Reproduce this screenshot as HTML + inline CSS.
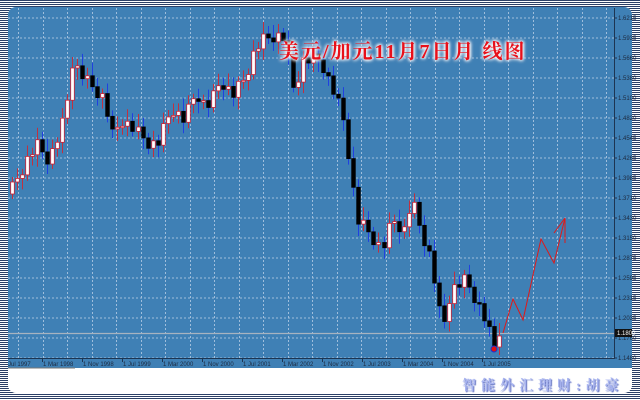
<!DOCTYPE html>
<html><head><meta charset="utf-8"><style>
html,body{margin:0;padding:0;}
body{width:640px;height:400px;overflow:hidden;position:relative;
background:repeating-linear-gradient(to bottom,#2b3f66 0,#2b3f66 1px,#fff 1px,#fff 2px);}
#panel{position:absolute;left:8px;top:7px;width:624px;height:386px;border-radius:8px;background:#fff;overflow:hidden;}
#blue{position:absolute;left:0;top:0;width:624px;height:361px;background:#3f80b5;}
svg{position:absolute;left:0;top:0;}
.t{position:absolute;left:279px;top:35px;font:bold 20px "Liberation Serif","Noto Serif CJK SC",serif;color:#e8101a;letter-spacing:2px;white-space:nowrap;
text-shadow:0 0 3px #fff,0 0 3px #fff,0 0 4px #fff,0 0 5px #dde;}
.b{position:absolute;left:462px;top:375px;font:bold 14px "Liberation Serif","Noto Serif CJK SC",serif;color:#a8b4f0;letter-spacing:5px;white-space:nowrap;text-shadow:1px 1px 1px #6070c0;}
</style></head><body>
<div id="panel"><div id="blue"></div></div>
<svg id="s" width="640" height="400"></svg>
<div class="t">美元/加元11月7日月 线图</div>
<div class="b">智能外汇理财:胡豪</div>
<script>
(function(){
var s=document.getElementById('s'),h='';
for(var y=18;y<=358;y+=20)h+='<line x1="8" y1="'+y+'" x2="614" y2="'+y+'" stroke="#9fbedc" stroke-dasharray="2,2" stroke-width="1"/>';
for(var x=18;x<614;x+=24.5)h+='<line x1="'+Math.round(x)+'.5" y1="8" x2="'+Math.round(x)+'.5" y2="358" stroke="#9fbedc" stroke-dasharray="2,2" stroke-width="1"/>';
h+='<line x1="614.5" y1="8" x2="614.5" y2="359" stroke="#1d3552"/><line x1="8" y1="358.5" x2="615" y2="358.5" stroke="#1d3552"/>';
var pr=['1.6215','1.5935','1.5660','1.5380','1.5100','1.4820','1.4545','1.4265','1.3985','1.3710','1.3430','1.3150','1.2875','1.2595','1.2315','1.2035','1.1760','1.1480'];
for(var i=0;i<pr.length;i++){var yy=18+i*20;h+='<line x1="614" y1="'+yy+'" x2="617" y2="'+yy+'" stroke="#1d3552"/><text x="618" y="'+(yy+2)+'" font-size="6" font-family="Liberation Sans" fill="#1d2a40">'+pr[i]+'</text>';}
var ds=['Jul 1997','1 Mar 1998','1 Nov 1998','1 Jul 1999','1 Mar 2000','1 Nov 2000','1 Jul 2001','1 Mar 2002','1 Nov 2002','1 Jul 2003','1 Mar 2004','1 Nov 2004','1 Jul 2005'];
for(i=0;i<ds.length;i++){var xx=2+i*40;h+='<text x="'+(i?xx+1:8)+'" y="366" font-size="6" font-family="Liberation Sans" fill="#1d2a40">'+ds[i]+'</text>';if(i)h+='<line x1="'+(xx+0.5)+'" y1="358" x2="'+(xx+0.5)+'" y2="362" stroke="#1d3552"/>';}
h+='<line x1="8" y1="333.5" x2="614" y2="333.5" stroke="#a7b3c0" stroke-width="1.2"/>';
h+='<rect x="615" y="329" width="17" height="8" fill="#111"/><text x="617" y="335" font-size="6" fill="#fff" font-family="Liberation Sans">1.1800</text>';
h+='<line x1="8" y1="368" x2="75" y2="368" stroke="#777"/>';
var A=[[10,188],[22,160],[30,145],[40,160],[50,130],[56,95],[58,60],[70,80],[85,98],[92,135],[100,120],[110,130],[120,142],[128,145],[140,108],[150,120],[160,92],[168,108],[175,95],[180,80],[190,95],[200,78],[208,50],[215,40],[225,35],[232,38],[240,90],[248,60],[262,60],[272,90],[280,115],[285,155],[292,220],[300,230],[312,250],[320,220],[330,230],[336,200],[342,225],[352,260],[358,310],[362,325],[368,290],[380,280],[390,303],[398,325],[403,350],[407,330]];
function f(x){for(var k=0;k<A.length-1;k++)if(x<=A[k+1][0]){var t=(x-A[k][0])/(A[k+1][0]-A[k][0]);return A[k][1]+t*(A[k+1][1]-A[k][1]);}return A[A.length-1][1];}
var prev=f(10)+6;
for(var n=0;n<98;n++){var x0=10+n*4.1;var c=f(x0)+((n*7)%5-2)*3;var o=prev;prev=c;
var up=c<o,bt=Math.min(o,c),bb=Math.max(o,c);if(bb-bt<1.5)bb=bt+1.5;
var wt=bt-5-(n*5%9),wb=bb+5+(n*3%8);var cx=Math.round(12+(x0-10)*1.2245)+0.5;
h+='<line x1="'+cx+'" y1="'+wt+'" x2="'+cx+'" y2="'+wb+'" stroke="'+(up?'#c03040':'#2040e0')+'"/>';
h+='<rect x="'+(cx-1.8)+'" y="'+bt+'" width="3.6" height="'+(bb-bt)+'" fill="'+(up?'#fff':'#000')+'" stroke="'+(up?'#d02030':'#000')+'" stroke-width="0.8"/>';}
h+='<polyline points="503,333 513,299 523,320 541,239 554,263 565,218 565,243" fill="none" stroke="#e01818" stroke-width="1"/><line x1="554" y1="233" x2="565" y2="218" stroke="#e01818"/>';
h+='<circle cx="494" cy="349" r="3" fill="#e01010" stroke="#2030d0"/>';
s.innerHTML=h;
})();
</script>
</body></html>
